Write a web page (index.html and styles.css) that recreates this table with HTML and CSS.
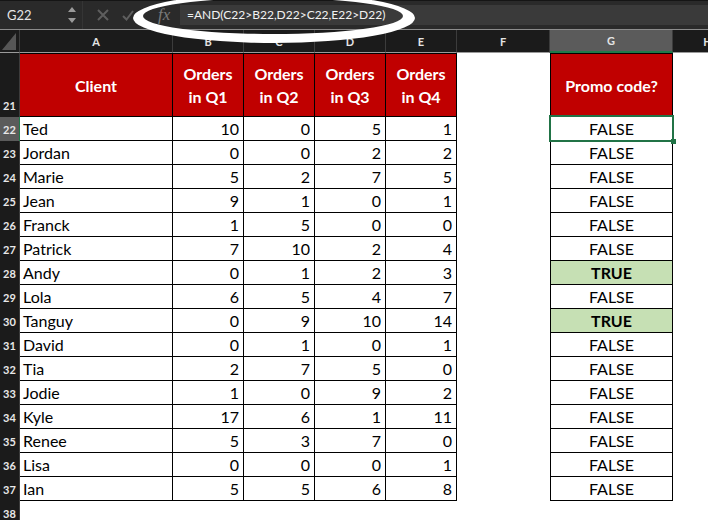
FILE: index.html
```html
<!DOCTYPE html>
<html lang="en">
<head>
<meta charset="utf-8">
<title>Promo code</title>
<link rel="stylesheet" href="styles.css">
</head>
<body>
<div class="app">
  <div class="topbar">
    <div class="namebox">
      <span class="ref">G22</span>
      <svg class="spin" width="8" height="18" viewBox="0 0 8 18"><path d="M0 6 L4 1 L8 6 Z M0 12 L8 12 L4 17 Z" fill="#9a9a9a"/></svg>
    </div>
    <div class="vsep"></div>
    <svg class="btn" width="12" height="12" viewBox="0 0 12 12"><path d="M1 1 L11 11 M11 1 L1 11" stroke="#5e5e5e" stroke-width="2"/></svg>
    <svg class="btn check" width="12" height="12" viewBox="0 0 12 12"><path d="M1 7 L4.5 10.5 L11 2" stroke="#5e5e5e" stroke-width="2" fill="none"/></svg>
    <span class="fx">fx</span>
    <div class="formula">=AND(C22&gt;B22,D22&gt;C22,E22&gt;D22)</div>
  </div>

  <div class="sheet">
    <div class="row colhead">
      <div class="corner"><span class="tri"></span></div>
      <div class="ch">A</div><div class="ch">B</div><div class="ch">C</div><div class="ch">D</div><div class="ch">E</div><div class="ch">F</div><div class="ch active">G</div><div class="ch">H</div>
    </div>

    <div class="row tall">
      <div class="rh bottom">21</div>
      <div class="c hd top">Client</div>
      <div class="c hd top">Orders<br>in Q1</div>
      <div class="c hd top">Orders<br>in Q2</div>
      <div class="c hd top">Orders<br>in Q3</div>
      <div class="c hd top">Orders<br>in Q4</div>
      <div class="e"></div>
      <div class="c g hd top">Promo code?</div>
      <div class="e"></div>
    </div>

    <div class="row"><div class="rh cur">22</div><div class="c t">Ted</div><div class="c n">10</div><div class="c n">0</div><div class="c n">5</div><div class="c n">1</div><div class="e"></div><div class="c g b sel">FALSE</div><div class="e"></div></div>
    <div class="row"><div class="rh">23</div><div class="c t">Jordan</div><div class="c n">0</div><div class="c n">0</div><div class="c n">2</div><div class="c n">2</div><div class="e"></div><div class="c g b">FALSE</div><div class="e"></div></div>
    <div class="row"><div class="rh">24</div><div class="c t">Marie</div><div class="c n">5</div><div class="c n">2</div><div class="c n">7</div><div class="c n">5</div><div class="e"></div><div class="c g b">FALSE</div><div class="e"></div></div>
    <div class="row"><div class="rh">25</div><div class="c t">Jean</div><div class="c n">9</div><div class="c n">1</div><div class="c n">0</div><div class="c n">1</div><div class="e"></div><div class="c g b">FALSE</div><div class="e"></div></div>
    <div class="row"><div class="rh">26</div><div class="c t">Franck</div><div class="c n">1</div><div class="c n">5</div><div class="c n">0</div><div class="c n">0</div><div class="e"></div><div class="c g b">FALSE</div><div class="e"></div></div>
    <div class="row"><div class="rh">27</div><div class="c t">Patrick</div><div class="c n">7</div><div class="c n">10</div><div class="c n">2</div><div class="c n">4</div><div class="e"></div><div class="c g b">FALSE</div><div class="e"></div></div>
    <div class="row"><div class="rh">28</div><div class="c t">Andy</div><div class="c n">0</div><div class="c n">1</div><div class="c n">2</div><div class="c n">3</div><div class="e"></div><div class="c g b yes">TRUE</div><div class="e"></div></div>
    <div class="row"><div class="rh">29</div><div class="c t">Lola</div><div class="c n">6</div><div class="c n">5</div><div class="c n">4</div><div class="c n">7</div><div class="e"></div><div class="c g b">FALSE</div><div class="e"></div></div>
    <div class="row"><div class="rh">30</div><div class="c t">Tanguy</div><div class="c n">0</div><div class="c n">9</div><div class="c n">10</div><div class="c n">14</div><div class="e"></div><div class="c g b yes">TRUE</div><div class="e"></div></div>
    <div class="row"><div class="rh">31</div><div class="c t">David</div><div class="c n">0</div><div class="c n">1</div><div class="c n">0</div><div class="c n">1</div><div class="e"></div><div class="c g b">FALSE</div><div class="e"></div></div>
    <div class="row"><div class="rh">32</div><div class="c t">Tia</div><div class="c n">2</div><div class="c n">7</div><div class="c n">5</div><div class="c n">0</div><div class="e"></div><div class="c g b">FALSE</div><div class="e"></div></div>
    <div class="row"><div class="rh">33</div><div class="c t">Jodie</div><div class="c n">1</div><div class="c n">0</div><div class="c n">9</div><div class="c n">2</div><div class="e"></div><div class="c g b">FALSE</div><div class="e"></div></div>
    <div class="row"><div class="rh">34</div><div class="c t">Kyle</div><div class="c n">17</div><div class="c n">6</div><div class="c n">1</div><div class="c n">11</div><div class="e"></div><div class="c g b">FALSE</div><div class="e"></div></div>
    <div class="row"><div class="rh">35</div><div class="c t">Renee</div><div class="c n">5</div><div class="c n">3</div><div class="c n">7</div><div class="c n">0</div><div class="e"></div><div class="c g b">FALSE</div><div class="e"></div></div>
    <div class="row"><div class="rh">36</div><div class="c t">Lisa</div><div class="c n">0</div><div class="c n">0</div><div class="c n">0</div><div class="c n">1</div><div class="e"></div><div class="c g b">FALSE</div><div class="e"></div></div>
    <div class="row"><div class="rh">37</div><div class="c t">Ian</div><div class="c n">5</div><div class="c n">5</div><div class="c n">6</div><div class="c n">8</div><div class="e"></div><div class="c g b">FALSE</div><div class="e"></div></div>
    <div class="row"><div class="rh">38</div><div class="e"></div><div class="e"></div><div class="e"></div><div class="e"></div><div class="e"></div><div class="e"></div><div class="e"></div><div class="e"></div></div>
  </div>

  <svg class="annot" width="708" height="60" viewBox="0 0 708 60">
    <path fill="#ffffff" fill-rule="evenodd" d="M133 18 A141 25 0 1 0 415 18 A141 25 0 1 0 133 18 Z M143 16 A130 18 0 1 0 403 16 A130 18 0 1 0 143 16 Z"/>
  </svg>
</div>
</body>
</html>
```

FILE: styles.css
```css
html, body {
  margin: 0;
  padding: 0;
  background: #ffffff;
}

.app {
  position: relative;
  width: 708px;
  height: 520px;
  overflow: hidden;
  font-family: Lato, "Open Sans", "Liberation Sans", sans-serif;
  background: #ffffff;
}

/* ---------- formula bar ---------- */
.topbar {
  display: flex;
  align-items: center;
  background: #2a2a2a;
  border-top: 1px solid #151515;
  border-bottom: 1px solid #8c8c8c;
  box-sizing: border-box;
  height: 30px;
}

.namebox {
  width: 82px;
  display: flex;
  align-items: center;
  justify-content: space-between;
  padding: 0 6px 0 7px;
  box-sizing: border-box;
}

.ref {
  color: #e6e6e6;
  font-size: 13px;
}

.spin {
  display: block;
}

.vsep {
  width: 1px;
  height: 28px;
  background: #353535;
}

.btn {
  display: block;
  margin-left: 14px;
}

.btn.check {
  margin-left: 13px;
}

.fx {
  font-family: "Liberation Serif", "DejaVu Serif", serif;
  font-style: italic;
  color: #7a7a7a;
  font-size: 17px;
  margin-left: 24px;
  width: 22px;
}

.formula {
  flex: 1;
  height: 20px;
  margin-top: -1px;
  background: #3a3a3a;
  color: #f2f2f2;
  font-size: 12px;
  line-height: 20px;
  padding-left: 7px;
  white-space: nowrap;
}

/* ---------- sheet grid ---------- */
.row {
  display: grid;
  grid-template-columns: 20px 153px 71px 71px 71px 71px 93px 123px 70px;
  height: 24px;
}

.row.colhead {
  height: 23px;
}

.row.tall {
  height: 64px;
}

.corner {
  position: relative;
  background: #1b1b1b;
  border-right: 1px solid #3c3c3c;
  border-bottom: 1px solid #9a9a9a;
}

.tri {
  position: absolute;
  right: 3px;
  bottom: 2px;
  width: 14px;
  height: 17px;
  background: #565656;
  clip-path: polygon(100% 0, 100% 100%, 0 100%);
}

.ch {
  background: #1b1b1b;
  color: #e4e4e4;
  font-size: 11px;
  font-weight: 700;
  display: flex;
  align-items: center;
  justify-content: center;
  border-right: 1px solid #3c3c3c;
  border-bottom: 1px solid #9a9a9a;
}

.ch.active {
  background: #5b5b5b;
  border-bottom: 2px solid #1f7a4a;
}

.rh {
  background: #1b1b1b;
  color: #e8e8e8;
  font-size: 11px;
  font-weight: 700;
  display: flex;
  align-items: center;
  justify-content: center;
  border-right: 1px solid #3c3c3c;
}

.rh.bottom {
  align-items: flex-end;
  padding-bottom: 5px;
}

.rh.cur {
  background: #5b5b5b;
  border-right: 1px solid #1f7a4a;
}

.e {
  background: #ffffff;
}

.c {
  border-right: 1px solid #000000;
  border-bottom: 1px solid #000000;
  font-size: 16px;
  line-height: 23px;
  color: #000000;
  white-space: nowrap;
  overflow: hidden;
}

.c.top {
  border-top: 1px solid #000000;
}

.c.g {
  border-left: 1px solid #000000;
}

.t {
  padding-left: 3px;
}

.n {
  text-align: right;
  padding-right: 4px;
}

.b {
  text-align: center;
}

.hd {
  background: #c00000;
  color: #ffffff;
  font-weight: 700;
  display: flex;
  align-items: center;
  justify-content: center;
  text-align: center;
  line-height: 23px;
}

.yes {
  background: #c6e0b4;
  font-weight: 700;
}

.sel {
  position: relative;
  overflow: visible;
}

.sel::after {
  content: "";
  position: absolute;
  left: -2px;
  right: -2px;
  top: -2px;
  bottom: -2px;
  border: 2px solid #217346;
}

.sel::before {
  content: "";
  position: absolute;
  right: -4px;
  bottom: -4px;
  width: 5px;
  height: 5px;
  background: #217346;
  z-index: 1;
}

/* ---------- annotation ---------- */
.annot {
  position: absolute;
  left: 0;
  top: 0;
  pointer-events: none;
}
```
